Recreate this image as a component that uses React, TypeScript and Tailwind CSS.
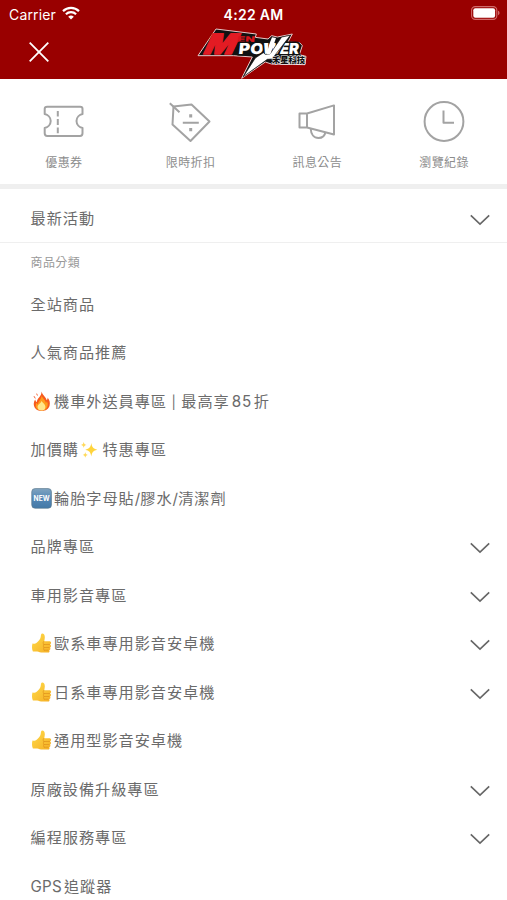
import type { ReactNode } from "react";

type EmojiName = "fire" | "sparkles" | "new" | "thumb";

interface MenuItem {
  before?: string;
  emoji?: EmojiName;
  label: ReactNode;
  expandable?: boolean;
}

const Slash = () => <span className="tracking-[0.1px]">/</span>;

const MENU_ITEMS: MenuItem[] = [
  { label: "全站商品" },
  { label: "人氣商品推薦" },
  {
    emoji: "fire",
    label: (
      <>
        機車外送員專區<span className="px-[4.5px] text-[13px]">|</span>最高享<span className="pl-0.5 pr-[1.5px]">85</span>折
      </>
    ),
  },
  { before: "加價購", emoji: "sparkles", label: "特惠專區" },
  {
    emoji: "new",
    label: (
      <>
        輪胎字母貼<Slash />膠水<Slash />清潔劑
      </>
    ),
  },
  { label: "品牌專區", expandable: true },
  { label: "車用影音專區", expandable: true },
  { emoji: "thumb", label: "歐系車專用影音安卓機", expandable: true },
  { emoji: "thumb", label: "日系車專用影音安卓機", expandable: true },
  { emoji: "thumb", label: "通用型影音安卓機" },
  { label: "原廠設備升級專區", expandable: true },
  { label: "編程服務專區", expandable: true },
  {
    label: (
      <>
        <span className="pr-0.5 tracking-[0.2px]">GPS</span>追蹤器
      </>
    ),
  },
];

const Chevron = () => (
  <svg className="w-5 h-3 mt-0.5 shrink-0" viewBox="0 0 20 12" fill="none" stroke="#666" strokeWidth="1.6">
    <path d="M0.8 1.4 10 10.2 19.2 1.4" />
  </svg>
);

const EMOJI_ART: Record<EmojiName, ReactNode> = {
  fire: (
    <>
      <path d="M10.5 0.5C11.5 4 15 6 15.7 9.2c.8-.8 1-1.7.9-2.7 2 2.5 2.7 5 2 8-.8 3.400-3.800 5.500-8 5.500-4.500 0-7.400-2.500-7.800-6.200-.2-2.300.5-4 1.500-5.400.2 1.400.7 2.200 1.600 2.700C5.800 7 10.800 5.800 10.500.5Z" fill="#f65a1e" />
      <path d="M10.500 4.500c.6 2.500 4.300 4.800 4.400 7.500.6-.4.9-1 .9-1.700 1 1.500 1.200 3 .7 4.900-.7 2.800-2.800 4.200-5.900 4.200-3.400 0-5.800-1.900-5.900-4.700 0-1.300.4-2.400 1-3.200.2.900.6 1.600 1.200 1.900.1-3 3.700-5 3.600-8.900Z" fill="#ff9c1b" />
      <path d="M10.500 10c.8 1.700 3.900 3 3.900 5.900 0 2.200-1.700 3.700-3.900 3.700s-3.900-1.300-3.900-3.600c0-2.600 3.200-3.500 3.900-6Z" fill="#ffe78a" />
      <path d="M3.200 5.500l.9 1.600M5.800 3l.5 1.200" stroke="#f4511e" strokeWidth="0.900" strokeLinecap="round" />
    </>
  ),
  sparkles: (
    <>
      <path d="M12.300 4c.7 4.400 1.900 5.700 6 6.700-4.100 1-5.300 2.300-6 6.700-.7-4.400-1.900-5.700-6-6.700 4.100-1 5.300-2.300 6-6.700Z" fill="#ffd43b" />
      <path d="M4.700 2.800c.3 2 1 2.700 2.800 3.100-1.800.4-2.500 1.100-2.800 3.100-.3-2-1-2.700-2.800-3.100 1.800-.4 2.500-1.100 2.800-3.100Z" fill="#ffd95a" />
      <path d="M6.300 13c.3 1.800.9 2.500 2.600 2.900-1.700.4-2.300 1.100-2.600 2.900-.3-1.800-.9-2.500-2.600-2.900 1.700-.4 2.300-1.100 2.600-2.900Z" fill="#ffd95a" />
    </>
  ),
  new: (
    <>
      <defs>
        <linearGradient id="new-badge" x1="0" y1="0" x2="0" y2="1">
          <stop offset="0" stopColor="#7fa3bf" />
          <stop offset="0.5" stopColor="#5488b6" />
          <stop offset="1" stopColor="#4479a7" />
        </linearGradient>
      </defs>
      <rect x="0.700" y="0.500" width="19.800" height="19.800" rx="3.500" fill="url(#new-badge)" stroke="#587589" strokeWidth="0.600" />
      <text x="10.600" y="13.200" textAnchor="middle" fontSize="7" fontWeight="700" fill="#fff" letterSpacing="0" textLength="16" lengthAdjust="spacingAndGlyphs" fontFamily="Inter, sans-serif">NEW</text>
    </>
  ),
  thumb: (
    <>
      <defs>
        <linearGradient id="thumb-skin" x1="0" y1="0" x2="1" y2="1">
          <stop offset="0" stopColor="#ffdc4a" />
          <stop offset="1" stopColor="#f5ae24" />
        </linearGradient>
      </defs>
      <path d="M1.500 10.600c1.500.3 3.300-.1 4.700-1.400 1.900-1.700 3.100-3.100 3.500-5.300.3-1.700.3-3.300 1.600-3.300 1.500 0 2.600 1.500 2.500 3.800 0 1.300-.4 2.500-.6 3.800h5c1.200 0 1.900.7 1.900 1.600 0 .8-.5 1.400-1.200 1.600.7.2 1.100.8 1.100 1.500 0 .8-.5 1.400-1.200 1.600.5.3.7.8.6 1.400-.1.700-.6 1.100-1.200 1.300.3.300.4.700.3 1.200-.2.900-.9 1.200-2 1.200h-4.600c-2.500 0-4.100-.7-5.700-1.100-1.400-.3-3.100.2-4.300.1-1-1.900-1.200-5.600-.4-8Z" fill="url(#thumb-skin)" />
      <path d="M13 8.200c-1 .8-1.300 2.200-.2 3.200M13 11.500h5.500M13 14.500h5M13.200 17.200h4M13 11.500c-.8 1-.7 2.200 0 3-.6.900-.5 2 .2 2.700" fill="none" stroke="#df921b" strokeWidth="0.700" strokeLinecap="round" />
    </>
  ),
};

const Emoji = ({ name }: { name: EmojiName }) => (
  <svg className="w-[23.5px] h-[21px] -mt-px shrink-0" viewBox="0 0 23.5 21">
    {EMOJI_ART[name]}
  </svg>
);

const StatusBar = () => (
  <div className="flex items-center h-7 px-[9px] text-white">
    <div className="flex flex-1 items-center gap-[6px]">
      <span className="text-[14px] tracking-[0.15px]">Carrier</span>
      <svg className="w-[18px] h-[14px] -mt-0.5" viewBox="0 0 18 14" fill="none" stroke="#fff" strokeWidth="2.2">
        <path d="M1 5.100a11.500 11.500 0 0 1 16 0M3.900 8.200a7.400 7.400 0 0 1 10.200 0" />
        <path d="M9 13.600 6.200 10.800a4 4 0 0 1 5.600 0Z" fill="#fff" stroke="none" />
      </svg>
    </div>
    <span className="text-[14px] font-semibold tracking-[0.3px]">4:22 AM</span>
    <div className="flex flex-1 justify-end">
      <svg className="w-[29px] h-[14px] -mt-0.5 -mr-[2px]" viewBox="0 0 29 14">
        <rect x="0.600" y="0.600" width="25.200" height="12.800" rx="3.600" fill="none" stroke="#d06a6a" strokeWidth="1.100" />
        <rect x="2.300" y="2.300" width="21.800" height="9.400" rx="2" fill="#fff" />
        <path d="M27 4.800c2 .6 2 3.800 0 4.400Z" fill="#d06a6a" />
      </svg>
    </div>
  </div>
);

const Logo = () => (
  <svg className="w-[150px] h-[53px]" viewBox="0 78 450 159" fontFamily="Inter, 'Liberation Sans', sans-serif">
    <path d="M108 87 229 102 226 112 264 117 275 107 292 111 337 102 324 126 360 129 367 137 358 164 378 169 375 194 274 192 256 186 185 235 217 171 160 167H54Z" fill="#111" stroke="#e9c9c9" strokeWidth="3" strokeLinejoin="round" />
    <g fill="#e31b23" stroke="#e31b23" strokeWidth="4" strokeLinejoin="round">
      <text transform="translate(66 161) skewX(-25)" fontSize="84" fontWeight="900" textLength="92" lengthAdjust="spacingAndGlyphs">M</text>
    </g>
    <text transform="translate(172 127) skewX(-6)" fontSize="24" fontWeight="900" fill="#d8141c" textLength="52" lengthAdjust="spacingAndGlyphs">EN</text>
    <g fill="#fff" stroke="#111" strokeWidth="9" paintOrder="stroke" fontWeight="900" fontSize="45">
      <text transform="translate(175 163) skewX(-6)" textLength="74" lengthAdjust="spacingAndGlyphs">PO</text>
      <text transform="translate(298 163) skewX(-6)" textLength="58" lengthAdjust="spacingAndGlyphs">ER</text>
      <text transform="translate(243 163) skewX(-14)" textLength="60" lengthAdjust="spacingAndGlyphs">W</text>
    </g>
    <path d="M331 106 305 111 270 162 256 163 250 158 226 174 190 230 262 178 277 177 286 164Z" fill="#fff" stroke="#111" strokeWidth="2" />
    <path d="M276 112 268 132 260 163 271 163 288 114Z" fill="#fff" />
    <text x="276" y="190" fontFamily="'Noto Sans CJK TC', sans-serif" fontSize="25" fontWeight="900" fill="#111" stroke="#fff" strokeWidth="3" paintOrder="stroke" textLength="99" lengthAdjust="spacingAndGlyphs">禾星科技</text>
  </svg>
);

const Header = () => (
  <header className="h-[79px] bg-[#990000]">
    <StatusBar />
    <div className="flex h-[51px] items-start">
      <div className="w-[180px] pt-[14px] pl-[29px]">
        <button className="block" aria-label="Close menu">
          <svg className="w-5 h-5" viewBox="0 0 20 20" stroke="#fff" strokeWidth="1.800">
            <path d="m.7.700 18.600 18.600M19.300.700.700 19.300" />
          </svg>
        </button>
      </div>
      <div className="-mt-0.5">
        <Logo />
      </div>
    </div>
  </header>
);

const SHORTCUTS = [
  {
    label: "優惠券",
    icon: (
      <>
        <path d="M5.200 6.700h33c1.300 0 2.300.8 2.300 2v5.300c-3 .7-6 3.400-6 7s3 6.300 6 7v5.300c0 1.500-1 2.700-2.500 2.700H5.200c-1.500 0-2.500-1.200-2.500-2.700V28c3-.7 6-3.400 6-7s-3-6.300-6-7V8.700c0-1.200 1-2 2.500-2Z" />
        <path d="M15.800 11v5.500M15.800 19v6M15.800 27.500v5.700" />
      </>
    ),
  },
  {
    label: "限時折扣",
    icon: (
      <>
        <path d="M4.500 6.500 22.500 4.500 40.500 21.500 21.500 41 3.500 24.500Z" />
        <path d="M.8 3.200 10.500 12.300M13.800 22.800h16" />
        <path d="M21.700 14.200v3.200M21.700 28v3.200" strokeWidth="3" />
      </>
    ),
  },
  {
    label: "訊息公告",
    icon: (
      <>
        <path d="M3.500 13.500H11v14H3.500ZM11 13.500l27-8.100v29.100L11 27.500Z" />
        <path d="M14.700 28.500c.2 5.600 3.200 9.500 7.800 9.500 3.600 0 6.300-2.400 7-6" />
      </>
    ),
  },
  {
    label: "瀏覽紀錄",
    icon: (
      <>
        <circle cx="21" cy="21.500" r="19.400" />
        <path d="M20.500 10.500v12.200H31" />
      </>
    ),
  },
];

const Shortcuts = () => (
  <nav className="grid grid-cols-4 h-[110px] pt-[21px] border-b-[5px] border-[#efefef]">
    {SHORTCUTS.map(({ label, icon }) => (
      <button key={label} className="flex flex-col items-center">
        <svg className="w-[42px] h-[43px]" viewBox="0 0 42 43" fill="none" stroke="#a3a3a3" strokeWidth="2" strokeLinejoin="round">
          {icon}
        </svg>
        <span className="mt-[10px] pl-px text-[12px] leading-5 tracking-[0.4px] text-[#8d8d8d]">{label}</span>
      </button>
    ))}
  </nav>
);

const MenuRow = ({ before, emoji, label, expandable }: MenuItem) => (
  <li className="flex h-[48.5px] items-center justify-between pl-[30.5px] pr-[17px]">
    <span className="flex items-center text-[15.2px] tracking-[0.95px] leading-6 whitespace-pre">
      {before}
      {emoji && <Emoji name={emoji} />}
      <span>{label}</span>
    </span>
    {expandable && <Chevron />}
  </li>
);

export default function App() {
  return (
    <div className="h-[900px] w-full overflow-hidden bg-white text-[#6b6b6b] font-['Inter','Noto_Sans_CJK_TC',sans-serif]">
      <Header />
      <Shortcuts />
      <ul className="h-[54px] pt-[6px] border-b border-[#efefef]">
        <MenuRow label="最新活動" expandable />
      </ul>
      <h2 className="h-[37.6px] pt-[10px] pl-[30.5px] text-[12px] leading-5 tracking-[0.4px] text-[#999]">商品分類</h2>
      <ul>
        {MENU_ITEMS.map((item, index) => (
          <MenuRow key={index} {...item} />
        ))}
      </ul>
    </div>
  );
}
